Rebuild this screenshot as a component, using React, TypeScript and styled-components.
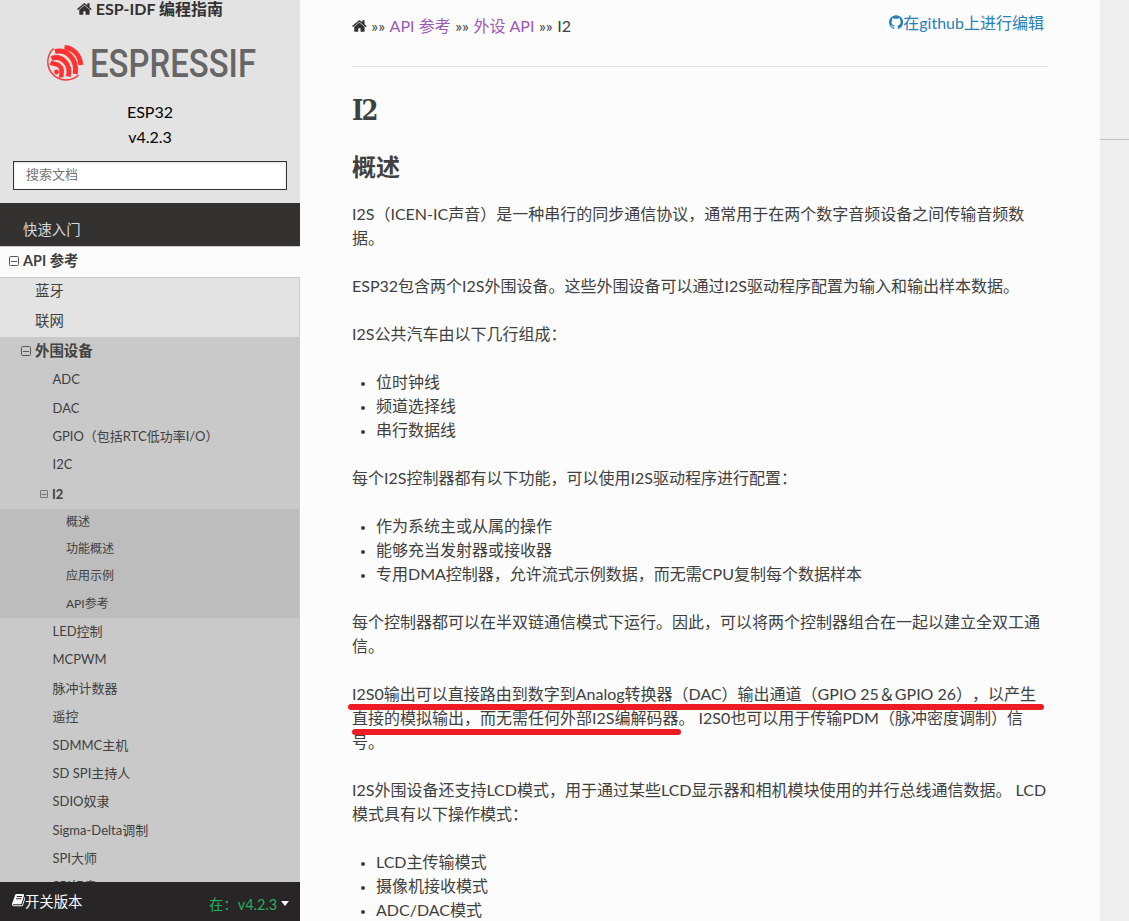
import React from "react";
import styled, { createGlobalStyle, css } from "styled-components";

const Global = createGlobalStyle`
  * { box-sizing: border-box; }
  html, body { margin: 0; padding: 0; overflow: hidden; }
  body {
    font-family: Lato, "Noto Sans CJK SC", sans-serif;
    font-size: 16px;
    color: #404040;
    background: #eeeeee;
    text-spacing-trim: space-all;
  }
`;

const Page = styled.div`
  display: flex;
  height: 921px;
  width: 1129px;
  overflow: hidden;
`;

const Sidebar = styled.nav`
  width: 300px;
  height: 100%;
  display: flex;
  flex-direction: column;
  background: #343131;
`;

const SearchArea = styled.header`
  height: 203px;
  flex: none;
  background: #e3e3e3;
  display: flex;
  flex-direction: column;
  align-items: center;
  color: #000;
`;

const ProjectLink = styled.a`
  display: flex;
  align-items: center;
  gap: 4px;
  height: 24px;
  margin-top: -3px;
  font-weight: 700;
  color: #343131;
  line-height: 24px;
`;

const Logo = styled.svg`
  width: 212px;
  height: 42px;
  margin: 21px 0 0 4px;
  display: block;
  overflow: visible;
`;

const Version = styled.div`
  line-height: 25px;
  height: 25px;
`;

const SearchInput = styled.input`
  width: 274px;
  height: 29px;
  margin-top: 12px;
  padding: 0 12px 4px;
  border: 1px solid #343131;
  border-radius: 0;
  background: #fff;
  box-shadow: inset 0 1px 3px #ddd;
  font: 13px Lato, "Noto Sans CJK SC", sans-serif;
  &::placeholder { color: #757575; opacity: 1; }
`;

const VersionInfo = styled.div`
  margin-top: 15px;
  text-align: center;
`;

const Menu = styled.div`
  flex: 1;
  min-height: 0;
  overflow: hidden;
  display: flex;
  flex-direction: column;
`;

const levels = {
  caption: css`
    height: 43px; padding: 10px 0 0 23px; color: #d9d9d9; background: #343131; font-size: 14.4px;
  `,
  top: css`
    height: 32px; padding: 0 0 3px 9px; background: #fcfcfc; font-size: 14.4px; font-weight: 700;
    border-top: 1px solid #c9c9c9; border-bottom: 1px solid #c9c9c9;
  `,
  second: css`
    height: 29.5px; padding: 0 0 3px 35px; background: #e3e3e3; font-size: 14.4px;
    border-right: 1px solid #c9c9c9;
  `,
  secondOpen: css`
    height: 29.5px; padding: 0 0 2px 21px; background: #c9c9c9; font-size: 14.4px; font-weight: 700;
  `,
  third: css`
    height: 28.4px; padding: 0 0 3px 52.5px; background: #c9c9c9; font-size: 13px;
  `,
  thirdOpen: css`
    height: 29px; padding: 0 0 2px 40px; background: #c9c9c9; font-size: 13px; font-weight: 700;
  `,
  fourth: css`
    height: 27.3px; padding: 0 0 2px 66px; background: #bdbdbd; font-size: 12px;
    border-right: 1px solid #c9c9c9;
  `,
};

type Level = keyof typeof levels;

const MenuRow = styled.a<{ $level: Level }>`
  flex: none;
  display: flex;
  align-items: center;
  white-space: nowrap;
  line-height: 18px;
  ${(p) => levels[p.$level]}
`;

const Collapse = styled.svg<{ $size: number }>`
  width: ${(p) => p.$size}px;
  height: ${(p) => p.$size}px;
  margin-right: 4px;
  flex: none;
`;

const Versions = styled.footer`
  height: 39px;
  flex: none;
  display: flex;
  justify-content: space-between;
  padding: 0 11.5px;
  background: #272525;
  color: #fcfcfc;
  font-size: 14.4px;
`;

const SwitchLabel = styled.span`
  display: flex;
  align-items: center;
  height: 37px;
`;

const Current = styled.span`
  display: flex;
  align-items: center;
  height: 43px;
  color: #27ae60;
`;

const Caret = styled.i`
  margin-left: 3.5px;
  border: 4px solid transparent;
  border-width: 5px 4.5px 0;
  border-top-color: #fcfcfc;
`;

const Main = styled.main`
  width: 800px;
  height: 100%;
  background: #fcfcfc;
  padding: 0 52px;
  overflow: hidden;
`;

const TopBar = styled.div`
  height: 67px;
  display: flex;
  justify-content: space-between;
  border-bottom: 1px solid #e1e4e5;
`;

const Crumbs = styled.div`
  display: flex;
  align-items: center;
  gap: 4.5px;
  height: 24px;
  margin-top: 13px;
  white-space: nowrap;
  svg { color: #343131; margin-top: 1px; }
`;

const VisitedLink = styled.a`
  color: #9b59b6;
`;

const EditLink = styled.a`
  display: flex;
  align-items: center;
  height: 24px;
  margin: 10px 4px 0 0;
  color: #2980b9;
  white-space: nowrap;
  svg { margin-top: 1px; }
`;

const Title = styled.h1`
  margin: 25px 0 0;
  height: 40px;
  font: 700 27px/38px "DejaVu Serif Condensed", "DejaVu Serif", serif;
  font-stretch: condensed;
  letter-spacing: -1.8px;
`;

const Subtitle = styled.h2`
  margin: 17px 0 0;
  height: 53px;
  font-size: 24px;
  line-height: 36px;
  font-weight: 700;
`;

const Para = styled.p`
  position: relative;
  margin: 0 0 24px;
  line-height: 24px;
  white-space: nowrap;
`;

const Line = styled.span`
  display: block;
  height: 24px;
`;

const List = styled.ul`
  margin: 0 0 24px;
  padding: 0;
  list-style: none;
`;

const Item = styled.li`
  display: flex;
  align-items: center;
  height: 24px;
  line-height: 24px;
  white-space: nowrap;
  &::before {
    content: "";
    width: 4px;
    height: 4px;
    margin: 4px 11px 0 9px;
    border-radius: 50%;
    background: #404040;
  }
`;

const Marker = styled.span<{ $left: number; $top: number; $width: number }>`
  position: absolute;
  left: ${(p) => p.$left}px;
  top: ${(p) => p.$top}px;
  width: ${(p) => p.$width}px;
  height: 6px;
  border-radius: 3px;
  background: #ed1c24;
`;

const Margin = styled.aside`
  flex: 1;
  background: #eeeeee;
`;

const MarginRule = styled.hr`
  margin: 139px 0 0;
  border: 0;
  border-top: 1px solid #c0c0c0;
`;

const HomeIcon = () => (
  <svg width="14.86" height="16" viewBox="0 0 1664 1792" fill="currentColor">
    <path d="M1408 992v480q0 26-19 45t-45 19h-384v-384h-256v384h-384q-26 0-45-19t-19-45v-480q0-1 .5-3t.5-3l575-474 575 474q1 2 1 6zm223-69l-62 74q-8 9-21 11h-3q-13 0-21-7l-692-577-692 577q-12 8-24 7-13-2-21-11l-62-74q-8-10-7-23.5t11-21.5l719-599q32-26 76-26t76 26l244 204v-195q0-14 9-23t23-9h192q14 0 23 9t9 23v408l219 182q10 8 11 21.5t-7 23.5z" />
  </svg>
);

const GithubIcon = () => (
  <svg width="14.2" height="16.6" viewBox="128 0 1536 1792" fill="currentColor">
    <path d="M896 128q209 0 385.500 103t279.500 279.500 103 385.500q0 251-146.500 451.500t-378.500 277.500q-27 5-40-7t-13-30q0-3 .5-76.500t.5-134.500q0-97-52-142 57-6 102.500-18t94-39 81-66.500 53-105 20.500-150.500q0-119-79-206 37-91-8-204-28-9-81 11t-92 44l-38 24q-93-26-192-26t-192 26q-16-11-42.500-27t-83.500-38.500-85-13.500q-45 113-8 204-79 87-79 206 0 85 20.500 150t52.500 105 80.500 67 94 39 102.500 18q-39 36-49 103-21 10-45 15t-57 5-65.500-21.500-55.500-62.500q-19-32-48.500-52t-49.500-24l-20-3q-21 0-29 4.500t-5 11.500 9 14 13 12l7 5q22 10 43.500 38t31.500 51l10 23q13 38 44 61.500t67 30 69.500 7 55.500-3.500l23-4q0 38 .5 88.500t.5 54.500q0 18-13 30t-40 7q-232-77-378.500-277.500t-146.500-451.500q0-209 103-385.500t279.500-279.500 385.500-103z" />
  </svg>
);

const BookIcon = () => (
  <svg width="13.4" height="14.4" viewBox="0 0 1664 1792" fill="currentColor">
    <path d="M1639 478q40 57 18 129l-275 906q-19 64-76.500 107.500t-122.500 43.500h-923q-77 0-148.500-53.500t-99.500-131.500q-24-67-2-127 0-4 3-27t4-37q1-8-3-21.500t-3-19.500q2-11 8-21t16.500-23.500 16.500-23.500q23-38 45-91.500t30-91.500q3-10 .5-30t-.5-28q3-11 17-28t17-23q21-36 42-92t25-90q1-9-2.500-32t.5-28q4-13 22-30.500t22-22.500q19-26 42.500-84.500t27.500-96.500q1-8-3-25.500t-2-26.500q2-8 9-18t18-23 17-21q8-12 16.500-30.500t15-35 16-36 19.500-32 26.500-23.500 36-11.500 47.500 5.500l-1 3q38-9 51-9h761q74 0 114 56t18 130l-274 906q-36 119-71.500 153.500t-128.500 34.500h-869q-27 0-38 15-11 16-1 43 24 70 144 70h923q29 0 56-15.500t35-41.500l300-987q7-22 5-57 38 15 59 43zm-1064 2q-4 13 2 22.500t20 9.500h608q13 0 25.500-9.500t16.500-22.500l21-64q4-13-2-22.500t-20-9.500h-608q-13 0-25.500 9.500t-16.500 22.500zm-83 256q-4 13 2 22.500t20 9.500h608q13 0 25.500-9.500t16.500-22.500l21-64q4-13-2-22.500t-20-9.500h-608q-13 0-25.500 9.500t-16.500 22.500z" />
  </svg>
);

const MinusBox = ({ size }: { size: number }) => (
  <Collapse $size={size} viewBox="0 0 10 10" fill="none" stroke="#555">
    <rect x="0.5" y="0.5" width="9" height="9" rx="1" />
    <path d="M2 5.500h6" />
  </Collapse>
);

const EspressifLogo = () => (
  <Logo viewBox="0 0 212 42">
    <g fill="none" stroke="#ff3232">
      <path d="M7.500 6.500A17.600 17.600 0 1 0 32.500 33" strokeWidth="1.400" />
      <path d="M18.500 5.300C27.500 6 34 13 34.800 23" strokeWidth="4.800" />
      <path d="M9 9.500C21 7 31.500 17 29.300 32" strokeWidth="5" />
      <path d="M5.500 16.500C15.500 12.500 25.500 22 22.300 34.500" strokeWidth="4.800" />
      <path d="M4.500 20.500C9 23 11.500 21 14.500 25c2.500 3.500.5 6.500.8 10.500" strokeWidth="4.500" />
    </g>
    <circle cx="10.500" cy="30" r="2.400" fill="#ff3232" />
    <text
      x="44"
      y="34.700"
      fontFamily="Roboto, sans-serif"
      fontSize="38"
      fontWeight="500"
      fill="#666"
      textLength="166"
      lengthAdjust="spacingAndGlyphs"
    >
      ESPRESSIF
    </text>
  </Logo>
);

const menu: { level: Level; label: string; box?: number }[] = [
  { level: "caption", label: "快速入门" },
  { level: "top", label: "API 参考", box: 10 },
  { level: "second", label: "蓝牙" },
  { level: "second", label: "联网" },
  { level: "secondOpen", label: "外围设备", box: 10 },
  { level: "third", label: "ADC" },
  { level: "third", label: "DAC" },
  { level: "third", label: "GPIO（包括RTC低功率I/O）" },
  { level: "third", label: "I2C" },
  { level: "thirdOpen", label: "I2", box: 8 },
  { level: "fourth", label: "概述" },
  { level: "fourth", label: "功能概述" },
  { level: "fourth", label: "应用示例" },
  { level: "fourth", label: "API参考" },
  { level: "third", label: "LED控制" },
  { level: "third", label: "MCPWM" },
  { level: "third", label: "脉冲计数器" },
  { level: "third", label: "遥控" },
  { level: "third", label: "SDMMC主机" },
  { level: "third", label: "SD SPI主持人" },
  { level: "third", label: "SDIO奴隶" },
  { level: "third", label: "Sigma-Delta调制" },
  { level: "third", label: "SPI大师" },
  { level: "third", label: "SPI奴隶" },
];

const Text = ({ lines, children }: { lines: string[]; children?: React.ReactNode }) => (
  <Para>
    {lines.map((l) => (
      <Line key={l}>{l}</Line>
    ))}
    {children}
  </Para>
);

const Bullets = ({ items }: { items: string[] }) => (
  <List>
    {items.map((i) => (
      <Item key={i}>{i}</Item>
    ))}
  </List>
);

export default function App() {
  return (
    <Page>
      <Global />
      <Sidebar>
        <SearchArea>
          <ProjectLink>
            <HomeIcon />
            ESP-IDF 编程指南
          </ProjectLink>
          <EspressifLogo />
          <VersionInfo>
            <Version>ESP32</Version>
            <Version>v4.2.3</Version>
          </VersionInfo>
          <SearchInput placeholder="搜索文档" />
        </SearchArea>
        <Menu>
          {menu.map((m) => (
            <MenuRow key={m.label + m.level} $level={m.level}>
              {m.box && <MinusBox size={m.box} />}
              {m.label}
            </MenuRow>
          ))}
        </Menu>
        <Versions>
          <SwitchLabel>
            <BookIcon />
            开关版本
          </SwitchLabel>
          <Current>
            在：v4.2.3
            <Caret />
          </Current>
        </Versions>
      </Sidebar>
      <Main>
        <TopBar>
          <Crumbs>
            <HomeIcon />
            <span>»»</span>
            <VisitedLink>API 参考</VisitedLink>
            <span>»»</span>
            <VisitedLink>外设 API</VisitedLink>
            <span>»»</span>
            <span>I2</span>
          </Crumbs>
          <EditLink>
            <GithubIcon />
            在github上进行编辑
          </EditLink>
        </TopBar>
        <Title>I2</Title>
        <Subtitle>概述</Subtitle>
        <Text
          lines={[
            "I2S（ICEN-IC声音）是一种串行的同步通信协议，通常用于在两个数字音频设备之间传输音频数",
            "据。",
          ]}
        />
        <Text lines={["ESP32包含两个I2S外围设备。这些外围设备可以通过I2S驱动程序配置为输入和输出样本数据。"]} />
        <Text lines={["I2S公共汽车由以下几行组成："]} />
        <Bullets items={["位时钟线", "频道选择线", "串行数据线"]} />
        <Text lines={["每个I2S控制器都有以下功能，可以使用I2S驱动程序进行配置："]} />
        <Bullets
          items={[
            "作为系统主或从属的操作",
            "能够充当发射器或接收器",
            "专用DMA控制器，允许流式示例数据，而无需CPU复制每个数据样本",
          ]}
        />
        <Text
          lines={[
            "每个控制器都可以在半双链通信模式下运行。因此，可以将两个控制器组合在一起以建立全双工通",
            "信。",
          ]}
        />
        <Text
          lines={[
            "I2S0输出可以直接路由到数字到Analog转换器（DAC）输出通道（GPIO 25＆GPIO 26），以产生",
            "直接的模拟输出，而无需任何外部I2S编解码器。 I2S0也可以用于传输PDM（脉冲密度调制）信",
            "号。",
          ]}
        >
          <Marker $left={-4} $top={22} $width={696} />
          <Marker $left={0} $top={47} $width={329} />
        </Text>
        <Text
          lines={[
            "I2S外围设备还支持LCD模式，用于通过某些LCD显示器和相机模块使用的并行总线通信数据。 LCD",
            "模式具有以下操作模式：",
          ]}
        />
        <Bullets items={["LCD主传输模式", "摄像机接收模式", "ADC/DAC模式"]} />
      </Main>
      <Margin>
        <MarginRule />
      </Margin>
    </Page>
  );
}
